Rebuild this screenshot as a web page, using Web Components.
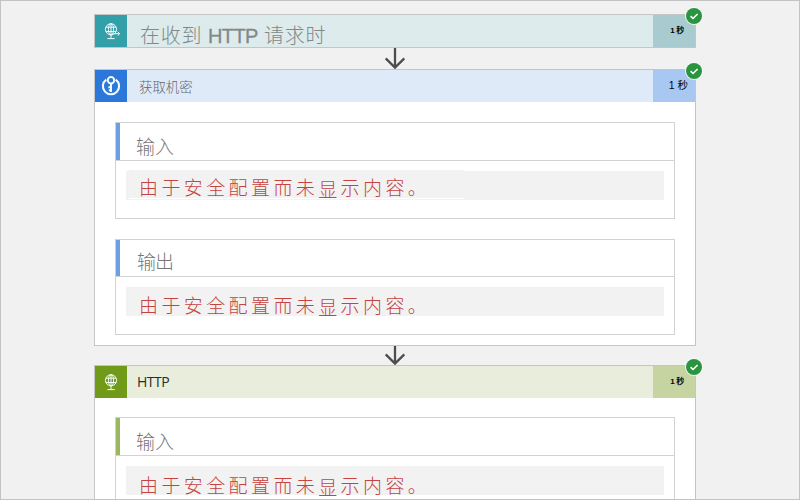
<!DOCTYPE html>
<html lang="zh-CN">
<head>
<meta charset="utf-8">
<title>运行历史</title>
<style>
html,body{margin:0;height:100%;overflow:hidden}
body{font-family:"Liberation Sans","Noto Sans CJK SC",sans-serif}
</style>
</head>
<body>
<run-canvas>
  <action-card style="--accent:#329fa9;--head:#deebec;--time:#a8cbcf;--head-color:#7f8988">
    <action-icon slot="icon" kind="request"></action-icon>
    <mixed-title slot="title"></mixed-title>
    <time-label slot="time" compact>1 秒</time-label>
  </action-card>
  <flow-arrow style="--h:21px"></flow-arrow>
  <action-card style="--accent:#2b78da;--head:#dfeaf8;--time:#a9c8f1;--bar:#6ba1e4;--body-h:243px">
    <action-icon slot="icon" kind="key"></action-icon>
    <span slot="title" style="font-size:13.4px;color:#62666c;font-weight:300;padding:0 0 1px 12px">获取机密</span>
    <time-label slot="time">1 秒</time-label>
    <io-panel patched style="--head-h:37px;--panel-h:95px;--text-top:2px"><span slot="label">输入</span></io-panel>
    <io-panel style="--head-h:36px;--panel-h:94px;--text-top:5px;--label-x:17px;--label-gap:-1px;--label-top:6px"><span slot="label">输出</span></io-panel>
  </action-card>
  <flow-arrow style="--h:19px"></flow-arrow>
  <action-card style="--accent:#719a19;--head:#e9eedc;--time:#c6d4a1;--bar:#9db75e;--body-h:243px;--body-top:19px">
    <action-icon slot="icon" kind="http"></action-icon>
    <span slot="title" style="font:14px 'Open Sans',sans-serif;letter-spacing:-.5px;color:#2b2b2b;padding:0 0 2px 10px">HTTP</span>
    <time-label slot="time" compact>1 秒</time-label>
    <io-panel style="--head-h:37px;--panel-h:95px;--text-top:7px"><span slot="label">输入</span></io-panel>
  </action-card>
</run-canvas>
<script>
function define(name, html, setup) {
  const template = document.createElement('template');
  template.innerHTML = html;
  customElements.define(name, class extends HTMLElement {
    constructor() {
      super();
      this.attachShadow({mode: 'open'}).append(template.content.cloneNode(true));
    }
    connectedCallback() { if (setup) setup(this, this.shadowRoot); }
  });
}

define('run-canvas', `<style>
:host{display:flex;flex-direction:column;align-items:center;box-sizing:border-box;width:800px;height:500px;overflow:hidden;background:#f1f1f1;border:1px solid #c3c3c3;padding:13px 10px 0 0}
::slotted(*){flex:none}
</style><slot></slot>`);

define('action-card', `<style>
:host{display:block;position:relative;box-sizing:border-box;width:602px;border:1px solid #c4c5c5;background:#fff}
header{display:grid;grid-template:32px / 32px 1fr 42px;height:32px;background:var(--head)}
.icon{background:var(--accent);display:grid}
.title{display:flex;align-items:center;color:var(--head-color);white-space:nowrap}
.time{background:var(--time);display:flex;justify-content:flex-end;align-items:center}
.body{height:var(--body-h,0px);display:flex;flex-direction:column;align-items:center;gap:20px;box-sizing:border-box}
.body.filled{padding-top:var(--body-top,20px)}
status-badge{position:absolute;right:-8px;top:-8px}
</style>
<header><div class="icon"><slot name="icon"></slot></div><div class="title"><slot name="title"></slot></div><div class="time"><slot name="time"></slot></div></header>
<div class="body"><slot></slot></div><status-badge></status-badge>`, (host, root) => {
  if (host.querySelector('io-panel')) root.querySelector('.body').classList.add('filled');
});

define('status-badge', `<style>:host{display:block;width:18px;height:18px}svg{display:block}</style>
<svg width="18" height="18" viewBox="0 0 18 18"><circle cx="9" cy="9" r="9" fill="#f4f8f4"/><circle cx="9" cy="9" r="8" fill="#2b9440"/><path d="M5.6 9.2 8 11.5l4.6-4.5" fill="none" stroke="#fff" stroke-width="1.6"/></svg>`);

define('flow-arrow', `<style>:host{display:block;width:22px;height:var(--h)}svg{display:block;width:22px;height:100%;overflow:visible}</style>
<svg><path fill="none" stroke="#4d4d4f" stroke-width="2.3"/></svg>`, (host, root) => {
  const h = host.offsetHeight;
  root.querySelector('path').setAttribute('d', `M11 0V${h - 2}M1.7 ${h - 10.6}l9.3 9.2 9.3-9.2`);
});

const globe = `<circle cx="16" cy="14.3" r="5.6"/><ellipse cx="16" cy="14.3" rx="2.6" ry="5.6"/><path d="M16 8.7v11.2M11 12.2h10M11 16.5h10M16 20v3M12.3 23.6h7.4"/>`;
const icons = {
  request: `<g stroke-width="1">${globe}<path d="M18.5 18.7h6M22.7 16.8l2 1.9-2 1.9"/></g>`,
  http: `<g stroke-width="1">${globe}</g>`,
  key: `<path stroke-width="2.1" d="M11.3 9.6a8.1 8.1 0 1 0 9.4 0"/><circle cx="16" cy="10.3" r="3.2" stroke-width="2"/><path stroke-width="2" d="M16 13.5V22M13.4 17.3H16M13.8 20.3H16"/>`
};
define('action-icon', `<style>:host{display:block;width:32px;height:32px}svg{display:block}</style>
<svg width="32" height="32" fill="none" stroke="#f2fbfb"></svg>`, (host, root) => {
  root.querySelector('svg').innerHTML = icons[host.getAttribute('kind')];
});

define('mixed-title', `<style>
:host{display:flex;align-items:baseline;padding:8px 0 0 13px;line-height:24px}
.cjk{font:300 20px/24px "Noto Sans CJK SC",sans-serif;letter-spacing:.7px;width:68px}
.latin{font-size:20px;-webkit-text-stroke:.3px;width:56px;letter-spacing:-.6px}
</style><span class="cjk">在收到</span><span class="latin">HTTP</span><span class="cjk">请求时</span>`);

define('time-label', `<style>
:host{display:block;color:#000;font:10.5px "Liberation Sans","Noto Sans CJK SC",sans-serif;padding:0 7px 4px 0;white-space:nowrap}
:host([compact]){font-size:8px;letter-spacing:-.3px;padding:0 11px 3px 0;font-weight:bold}
</style><slot></slot>`);

define('io-panel', `<style>
:host{display:block;box-sizing:content-box;width:558px;height:var(--panel-h);border:1px solid #d2d2d2;flex:none}
.head{height:var(--head-h);box-sizing:border-box;border-left:4px solid var(--bar);display:flex;align-items:center;padding:var(--label-top,8px) 0 0 var(--label-x,16px);font:300 19px/28px "Noto Sans CJK SC",sans-serif;letter-spacing:var(--label-gap,0px);color:#777}
.rule{height:1px;background:#d2d2d2}
.strip{position:relative;margin:10px 10px 0;height:29px;background:#f2f2f2;display:flex;align-items:center;box-sizing:border-box;padding:var(--text-top) 0 0 13px;font:300 19px/29px "Noto Sans CJK SC",sans-serif;letter-spacing:3.4px;color:#c54340;white-space:nowrap}
.text{position:relative}
.low{vertical-align:-2px;line-height:1}
:host([patched]) .strip::before{content:"";position:absolute;left:3px;top:-1px;width:335px;height:28px;background:#f2f2f2;border-bottom:1px solid #fff}
</style><div class="head"><slot name="label"></slot></div><div class="rule"></div><div class="strip"><span class="text">由于安全配置而未<span class="low">显</span>示内容。</span></div>`);
</script>
</body>
</html>
